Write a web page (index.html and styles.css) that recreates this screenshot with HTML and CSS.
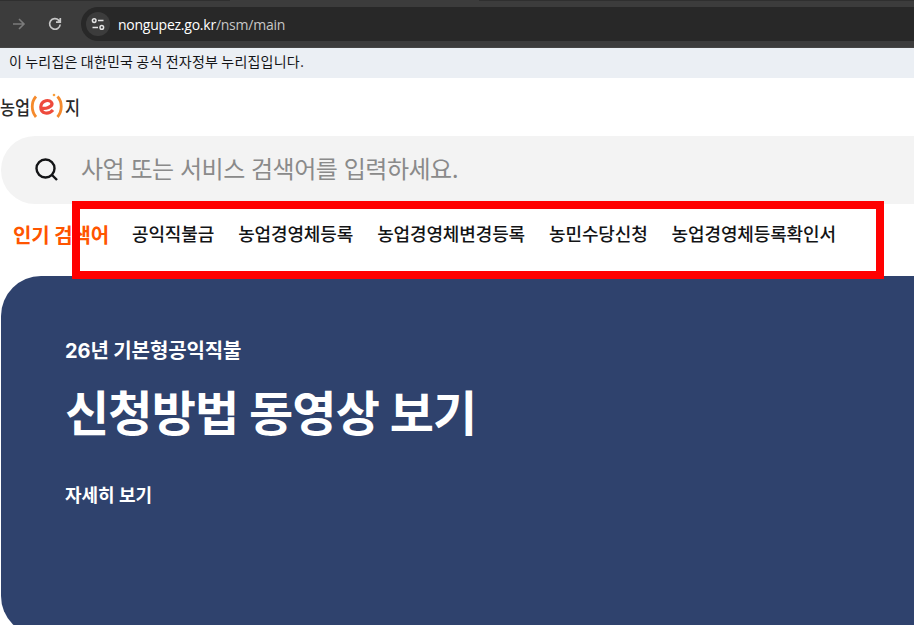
FILE: index.html
```
<!DOCTYPE html>
<html lang="ko">

<head>
    <meta charset="UTF-8">
    <meta name="viewport" content="width=device-width, initial-scale=1.0">
    <title>농업e지</title>
    <link rel="stylesheet" href="styles.css">
</head>

<body>
    <!-- Browser toolbar -->
    <div class="toolbar">
        <svg class="forward" width="14" height="12" viewBox="0 0 14 12">
            <path d="M1 6h11M7 1l5 5-5 5" />
        </svg>
        <svg class="reload" width="14" height="14" viewBox="0 0 14 14">
            <path d="M12.200 7.500A5.300 5.300 0 1 1 10.800 3.300L12.200 4.800M12.300 1v4.200H8" />
        </svg>
        <div class="address">
            <span class="site-info">
                <svg width="14" height="12" viewBox="0 0 14 12">
                    <circle cx="3.200" cy="2.600" r="1.800" />
                    <path d="M7 2.600h5.500M1.500 9.400h5.500" />
                    <circle cx="10.800" cy="9.400" r="1.800" />
                </svg>
            </span>
            <span class="url">nongupez.go.kr<span class="path">/nsm/main</span></span>
        </div>
    </div>

    <div class="notice">이 누리집은 대한민국 공식 전자정부 누리집입니다.</div>

    <!-- Logo -->
    <header class="header">
        <a class="logo">
            <span class="word">농업</span>
            <svg width="34" height="26" viewBox="0 0 34 26">
                <g class="brackets">
                    <path d="M6 3.500C1 9 1 18 6 24" />
                    <path d="M27.500 3.500C32.500 9 32.500 18 27.500 24" />
                </g>
                <path class="letter" d="M11.500 15C15.500 16.500 22.500 13.500 22 10.500C20.500 5.500 11 7 10.800 14C10.800 21.500 19 21.500 23 17" />
                <circle class="dot" cx="24" cy="2" r="1.300" />
            </svg>
            <span class="word">지</span>
        </a>
    </header>

    <!-- Search -->
    <div class="search">
        <svg width="24" height="24" viewBox="0 0 24 24">
            <circle cx="10.500" cy="10.500" r="9" />
            <path d="M17 17l5 5" />
        </svg>
        <span class="placeholder">사업 또는 서비스 검색어를 입력하세요.</span>
    </div>

    <div class="popular">
        <strong>인기 검색어</strong>
        <a>공익직불금</a>
        <a>농업경영체등록</a>
        <a>농업경영체변경등록</a>
        <a>농민수당신청</a>
        <a>농업경영체등록확인서</a>
        <div class="highlight"></div>
    </div>

    <!-- Main banner -->
    <section class="banner">
        <p class="sub">26년 기본형공익직불</p>
        <h1>신청방법 동영상 보기</h1>
        <a class="more">자세히 보기</a>
    </section>
</body>

</html>
```
FILE: styles.css
```
* {
    box-sizing: border-box;
}

body {
    margin: 0;
    height: 625px;
    overflow: hidden;
    background: #ffffff;
    color: #131416;
    font-family: Inter, "Noto Sans CJK KR", sans-serif;
    white-space: nowrap;
}

svg {
    display: block;
    flex: none;
    fill: none;
}

/* Browser toolbar */
.toolbar {
    display: flex;
    align-items: center;
    height: 48px;
    padding-left: 12px;
    background: linear-gradient(90deg, #2f2f2f 230px, #3c3c3c 230px 479px, #2f2f2f 479px) top / 100% 1px no-repeat #3c3c3c;
    border-bottom: 1px solid #454545;
}

.forward {
    stroke: #7b7b7b;
    stroke-width: 1.6;
}

.reload {
    margin-left: 22px;
    stroke: #c7c7c7;
    stroke-width: 1.7;
}

.address {
    display: flex;
    flex: 1;
    align-items: center;
    height: 34px;
    margin: 1px 0 0 19px;
    padding-left: 5px;
    background: #282828;
    border-radius: 17px 0 0 17px;
}

.site-info {
    display: flex;
    align-items: center;
    justify-content: center;
    width: 24px;
    height: 24px;
    background: #3c3c3c;
    border-radius: 50%;
}

.site-info svg {
    stroke: #e3e3e3;
    stroke-width: 1.5;
}

.url {
    margin-left: 8px;
    color: #ffffff;
    font-family: "Open Sans", "Noto Sans", sans-serif;
    font-size: 14px;
    letter-spacing: -0.24px;
}

.path {
    color: #c7c7c7;
}

.notice {
    height: 30px;
    padding-left: 9px;
    background: #ebeff4;
    font-size: 14px;
    letter-spacing: 0.22px;
    line-height: 27px;
    word-spacing: -1px;
}

/* Logo */
.header {
    height: 58px;
    padding-top: 13px;
}

.logo {
    display: flex;
    align-items: center;
    height: 30px;
    color: #2b2b2b;
    font-size: 19px;
    font-weight: 500;
}

.logo svg {
    margin: 0 1px 0 -5px;
}

.word {
    transform: scaleX(0.86);
    transform-origin: left;
}

.brackets {
    stroke: #f58a2c;
    stroke-width: 2.8;
}

.letter {
    stroke: #ee4a3c;
    stroke-width: 3.2;
}

.dot {
    fill: #f9a03c;
}

/* Search */
.search {
    display: flex;
    align-items: center;
    height: 68px;
    margin-left: 1px;
    padding-left: 34px;
    background: #f3f3f3;
    border-radius: 34px 0 0 34px;
}

.search svg {
    stroke: #131416;
    stroke-width: 2.4;
}

.placeholder {
    margin-left: 22px;
    padding-bottom: 5px;
    color: #8a8a8a;
    font-size: 24px;
    letter-spacing: -0.48px;
}

.popular {
    position: relative;
    display: flex;
    align-items: center;
    gap: 24px;
    height: 72px;
    padding: 0 0 15px 13px;
    font-size: 18px;
    font-weight: 500;
    letter-spacing: -0.13px;
}

.popular strong {
    padding-top: 3px;
    margin-right: -1px;
    color: #ff5500;
    font-size: 20px;
    font-weight: 700;
}

.highlight {
    position: absolute;
    top: -3px;
    left: 72px;
    width: 812px;
    height: 78px;
    border: 8px solid #ff0000;
}

/* Main banner */
.banner {
    height: 360px;
    margin-left: 1px;
    padding: 60px 64px;
    background: #2f426d;
    border-radius: 40px 0 0 40px;
    color: #ffffff;
    font-weight: 700;
}

.sub {
    margin: 0;
    font-size: 20px;
    letter-spacing: -0.1px;
    line-height: 31px;
}

h1 {
    margin: 13px 0 0;
    font-size: 48px;
    letter-spacing: -0.8px;
    line-height: 68px;
}

.more {
    display: block;
    margin-top: 34px;
    font-size: 18px;
    line-height: 27px;
}
```
